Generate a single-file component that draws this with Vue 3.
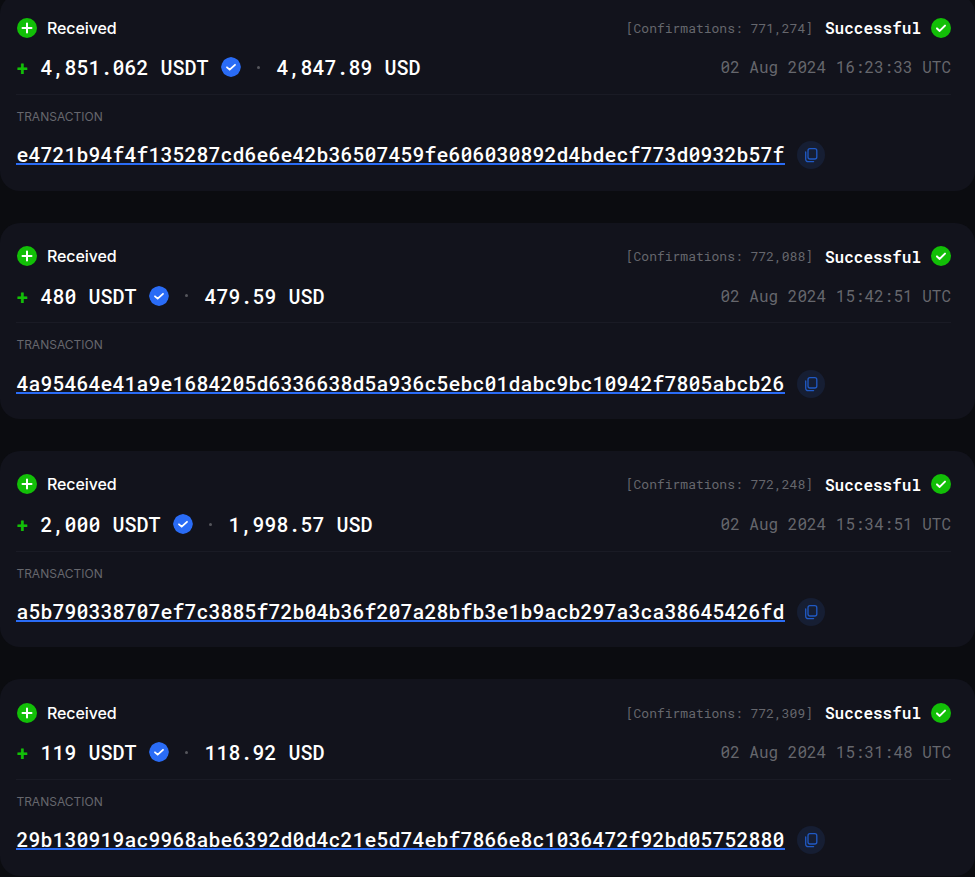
<template>
  <div class="list">
    <div class="tx-card" v-for="tx in txs" :key="tx.hash">
      <div class="row top">
        <div class="kind">
          <span class="dot">
            <svg width="20" height="20" viewBox="0 0 20 20"><path d="M10 5.500v9M5.500 10h9" stroke="#fff" stroke-width="2" stroke-linecap="round" /></svg>
          </span>
          <span>Received</span>
        </div>
        <div class="status">
          <span class="confirm">[Confirmations: {{ tx.confirmations }}]</span>
          <span class="ok">Successful</span>
          <span class="dot">
            <svg width="20" height="20" viewBox="0 0 20 20"><path d="M6 10.400l2.700 2.500L14 7.600" fill="none" stroke="#fff" stroke-width="2" stroke-linecap="round" stroke-linejoin="round" /></svg>
          </span>
        </div>
      </div>
      <div class="row amounts">
        <div class="amount">
          <span class="plus">+</span>
          <span>{{ tx.amount }} USDT</span>
          <svg class="verified" width="20" height="20" viewBox="0 0 20 20">
            <path d="M10 0l3.600 1 3.400 1.900 2 3.500.9 3.600-.9 3.600-2 3.500-3.400 1.900-3.600 1-3.600-1L3 17.100 1 13.600 0 10l1-3.600L3 2.900 6.400 1z" fill="#2a6cf6" />
            <path d="M6 10.300l2.700 2.400L14 7.800" fill="none" stroke="#fff" stroke-width="1.800" stroke-linecap="round" stroke-linejoin="round" />
          </svg>
          <span class="sep"></span>
          <span>{{ tx.usd }} USD</span>
        </div>
        <span class="time">{{ tx.time }}</span>
      </div>
      <div class="label">TRANSACTION</div>
      <div class="hash-row">
        <a class="hash">{{ tx.hash }}</a>
        <button class="copy">
          <svg width="16" height="16" viewBox="0 0 16 16" fill="none" stroke="#2059c4" stroke-width="1.300">
            <rect x="5" y="1.700" width="8.800" height="10.300" rx="2" />
            <path d="M2.700 5v7.300a2.300 2.300 0 0 0 2.300 2.300h5.600" stroke-linecap="round" />
          </svg>
        </button>
      </div>
    </div>
  </div>
</template>

<script setup>
const txs = [
  { amount: '4,851.062', usd: '4,847.89', confirmations: '771,274', time: '02 Aug 2024 16:23:33 UTC', hash: 'e4721b94f4f135287cd6e6e42b36507459fe606030892d4bdecf773d0932b57f' },
  { amount: '480', usd: '479.59', confirmations: '772,088', time: '02 Aug 2024 15:42:51 UTC', hash: '4a95464e41a9e1684205d6336638d5a936c5ebc01dabc9bc10942f7805abcb26' },
  { amount: '2,000', usd: '1,998.57', confirmations: '772,248', time: '02 Aug 2024 15:34:51 UTC', hash: 'a5b790338707ef7c3885f72b04b36f207a28bfb3e1b9acb297a3ca38645426fd' },
  { amount: '119', usd: '118.92', confirmations: '772,309', time: '02 Aug 2024 15:31:48 UTC', hash: '29b130919ac9968abe6392d0d4c21e5d74ebf7866e8c1036472f92bd05752880' },
]
</script>

<style>
html, body {
  background: #0b0c10;
  overflow: hidden;
}
</style>

<style scoped>
.list {
  display: flex;
  flex-direction: column;
  gap: 32px;
  margin-top: -5.67px;
}
.tx-card {
  background: #12131c;
  border-radius: 20px;
  padding: 23.4px 24px 0 16.4px;
  height: 196.33px;
  box-sizing: border-box;
  color: #fff;
}
.row {
  display: flex;
  justify-content: space-between;
  align-items: center;
}
.top {
  height: 20px;
}
.kind {
  display: flex;
  align-items: center;
  gap: 10px;
  margin-left: 0.6px;
  letter-spacing: -0.1px;
  font: 500 16px/20px Inter, sans-serif;
}
.dot {
  width: 20px;
  height: 20px;
  border-radius: 50%;
  background: #12bf07;
  display: inline-flex;
}
.status {
  display: flex;
  align-items: center;
  font-family: "Roboto Mono", monospace;
}
.confirm {
  font-size: 13px;
  color: #66676d;
  margin-right: 12px;
}
.ok {
  font-size: 16px;
  font-weight: 600;
  margin-right: 10px;
}
.amounts {
  height: 44.57px;
  margin-top: 12.7px;
  padding-bottom: 9.57px;
  box-sizing: border-box;
  border-bottom: 1px solid #1a1b25;
}
.amount {
  display: flex;
  align-items: center;
  font: 500 20px/26px "Roboto Mono", monospace;
}
.plus {
  color: #12bf07;
  font-weight: 700;
  margin-right: 12px;
}
.verified {
  margin-left: 13px;
}
.sep {
  width: 3px;
  height: 3px;
  border-radius: 50%;
  background: #55565c;
  margin: 0 16px 0 16px;
}
.time {
  font: 400 16px/26px "Roboto Mono", monospace;
  color: #66676d;
}
.label {
  margin-top: 14px;
  font: 400 12px/16px Inter, sans-serif;
  color: #66676d;
}
.hash-row {
  display: flex;
  align-items: center;
  gap: 12.4px;
  margin-top: 16px;
  height: 28px;
}
.hash {
  font: 500 20px/18px "Roboto Mono", monospace;
  border-bottom: 2px solid #2a6cf6;
  margin-top: 1px;
  color: #fff;
}
.copy {
  width: 28px;
  height: 28px;
  margin-top: 1px;
  border: 0;
  border-radius: 50%;
  background: #161e33;
  padding: 0;
  display: flex;
  align-items: center;
  justify-content: center;
}
</style>
